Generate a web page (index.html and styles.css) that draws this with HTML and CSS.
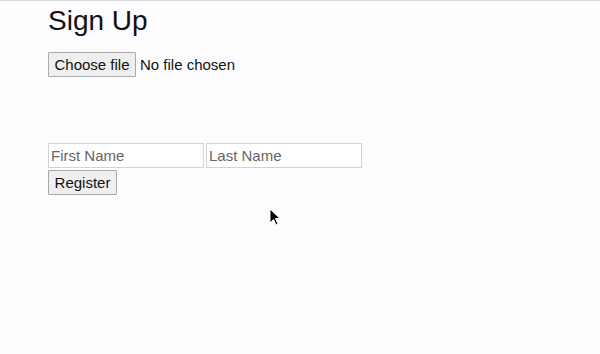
FILE: index.html
```html
<!DOCTYPE html>
<html>
<head>
<meta charset="utf-8">
<link rel="stylesheet" href="styles.css">
</head>
<body>
<div class="page">
  <h1 class="title">Sign Up</h1>
  <div class="file-row">
    <button class="btn">Choose file</button>
    <span class="file-text">No file chosen</span>
  </div>
  <div class="fields">
    <input class="field" type="text" placeholder="First Name">
    <input class="field" type="text" placeholder="Last Name">
  </div>
  <button class="btn reg">Register</button>
</div>
<svg class="cursor" width="12" height="18" viewBox="0 0 12 18"><path d="M1 1 L1 15 L4.5 11.5 L7 17 L9 16 L6.5 10.5 L11 10.5 Z" fill="#000" stroke="#fff" stroke-width="1"/></svg>
</body>
</html>
```
FILE: styles.css
```css
html, body { margin: 0; padding: 0; }
body {
  background: #fdfcfe;
  border-top: 1px solid #d8d8d8;
  height: 353px;
  font-family: "Liberation Sans", Arial, sans-serif;
  color: #111;
  position: relative;
  overflow: hidden;
}
.page { padding-left: 48px; }
.title {
  margin: 0;
  padding-top: 3px;
  font-size: 28px;
  font-weight: 400;
  line-height: 34px;
}
.file-row {
  margin-top: 13px;
  display: flex;
  align-items: center;
  gap: 4px;
  height: 26px;
}
.btn {
  font-family: "Liberation Sans", Arial, sans-serif;
  font-size: 15px;
  color: #111;
  background: #efefef;
  border: 1px solid #a9a9a9;
  border-radius: 1px;
  padding: 0;
  height: 25px;
  margin: 0;
  white-space: nowrap;
}
.file-row .btn { width: 88px; }
.file-text { font-size: 15px; }
.fields {
  margin-top: 66px;
  display: flex;
  gap: 2px;
}
.field {
  width: 156px;
  height: 25px;
  box-sizing: border-box;
  border: 1px solid #d3d3d3;
  background: #fff;
  font-family: "Liberation Sans", Arial, sans-serif;
  font-size: 15px;
  padding: 0 2px;
  margin: 0;
}
.field::placeholder { color: #666; }
.reg { margin-top: 2px; width: 69px; height: 25px; }
.cursor { position: absolute; left: 269px; top: 207px; }
```
